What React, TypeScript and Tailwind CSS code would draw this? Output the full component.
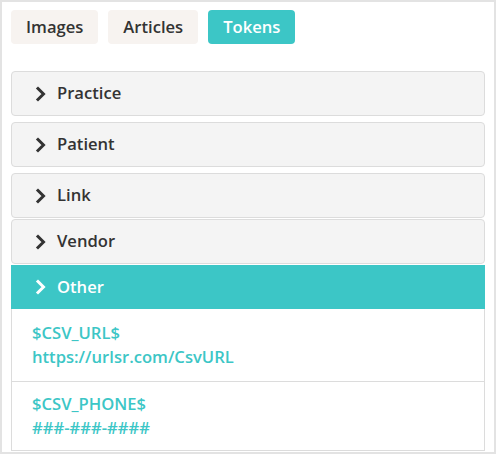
import React from "react";

const tabs = [
  { label: "Images", active: false },
  { label: "Articles", active: false },
  { label: "Tokens", active: true },
];

const tokens = [
  { name: "$CSV_URL$", value: "https://urlsr.com/CsvURL" },
  { name: "$CSV_PHONE$", value: "###-###-####" },
];

function Chevron({ white }: { white?: boolean }) {
  return (
    <svg width="12" height="16" viewBox="0 0 12 16" className="shrink-0">
      <polyline
        points="3,2.5 8.5,8 3,13.5"
        fill="none"
        stroke={white ? "#ffffff" : "#333333"}
        strokeWidth="3"
        strokeLinecap="square"
      />
    </svg>
  );
}

function PanelHeader({ label, className = "" }: { label: string; className?: string }) {
  return (
    <div
      className={`flex h-[45px] items-center gap-[10px] rounded-[4px] border border-[#dcdcdc] bg-[#f4f4f4] pl-[23px] text-[16.6px] font-semibold text-[#333] ${className}`}
    >
      <Chevron />
      <span>{label}</span>
    </div>
  );
}

export default function App() {
  return (
    <div
      className="h-[454px] w-[496px] border-2 border-[#e3e3e3] bg-white px-[9px] pt-[8px]"
      style={{ fontFamily: '"Open Sans", "Noto Sans", sans-serif' }}
    >
      <nav className="flex gap-[10px]">
        {tabs.map((tab) => (
          <button
            key={tab.label}
            className={`h-[34px] rounded-[4px] px-[15px] text-[16.6px] font-semibold ${
              tab.active ? "bg-[#3cc6c6] text-white" : "bg-[#f7f3f0] text-[#333]"
            }`}
          >
            {tab.label}
          </button>
        ))}
      </nav>

      <div className="mt-[27px] flex flex-col">
        <PanelHeader label="Practice" className="mb-[6px]" />
        <PanelHeader label="Patient" className="mb-[6px]" />
        <PanelHeader label="Link" className="mb-[1px] h-[44px]" />
        <PanelHeader label="Vendor" className="mb-[1px]" />

        <div className="flex h-[44px] items-center gap-[10px] bg-[#3cc6c6] pl-[24px] text-[16.6px] font-semibold text-white">
          <Chevron white />
          <span>Other</span>
        </div>
        <div className="border-x border-b border-[#dcdcdc] bg-white">
          {tokens.map((t, i) => (
            <div
              key={t.name}
              className={`flex flex-col justify-center pl-[20px] text-[16.6px] font-semibold leading-[24px] text-[#3cc6c6] ${
                i > 0 ? "h-[69px] border-t border-[#dcdcdc]" : "h-[72px]"
              }`}
            >
              <span>{t.name}</span>
              <span>{t.value}</span>
            </div>
          ))}
        </div>
      </div>
    </div>
  );
}
